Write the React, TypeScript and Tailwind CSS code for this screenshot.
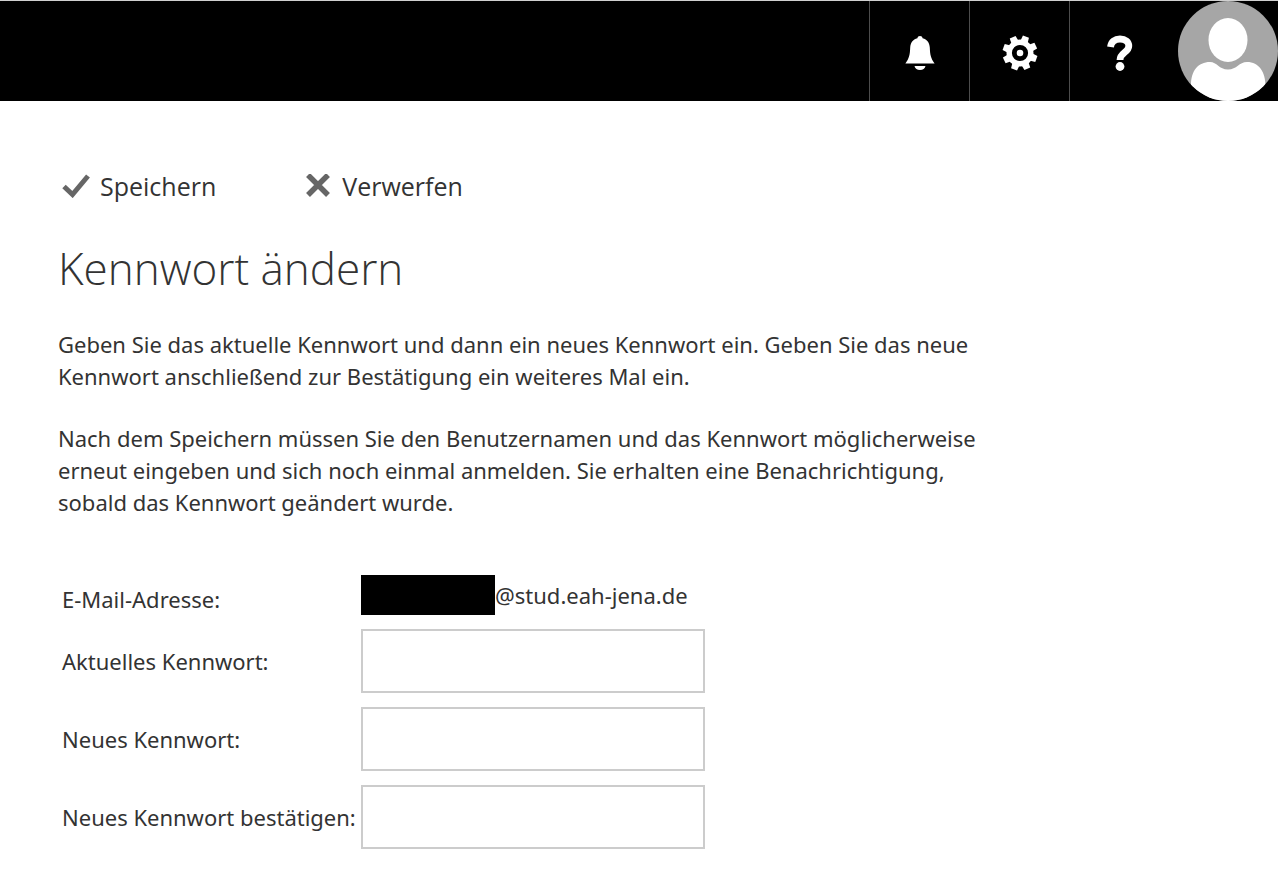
import type { ReactNode } from 'react'

const FIELDS = [
  { id: 'current', label: 'Aktuelles Kennwort:' },
  { id: 'next', label: 'Neues Kennwort:' },
  { id: 'confirm', label: 'Neues Kennwort bestätigen:' },
]

function BellIcon() {
  return (
    <svg width="30" height="34" viewBox="0 0 30 34" fill="#fff" aria-hidden="true">
      <path d="M15 0c1.5 0 2.3.8 2.6 2.2 4.600 1.300 6.900 4.500 7.200 9.300.3 7 .8 10.500 4.800 16H.4c4-5.500 4.500-9 4.800-16 .3-4.800 2.600-8 7.200-9.300C12.700.8 13.500 0 15 0Z" />
      <path d="M9.500 30h11c-.6 2.500-2.600 4-5.500 4s-4.900-1.500-5.500-4Z" />
    </svg>
  )
}

function GearIcon() {
  return (
    <svg width="36" height="36" viewBox="-18 -18 36 36" aria-hidden="true">
      <circle r="10.800" fill="none" stroke="#fff" strokeWidth="5.400" />
      <circle r="3.300" fill="#fff" />
      <g fill="#fff">
        {[20, 65, 110, 155, 200, 245, 290, 335].map((deg) => (
          <path key={deg} transform={`rotate(${deg})`} d="M-3.800-11.500-3.200-17.400H3.200L3.800-11.500Z" />
        ))}
      </g>
    </svg>
  )
}

function HelpIcon() {
  return (
    <svg width="26" height="36" viewBox="0 0 26 36" aria-hidden="true">
      <path
        d="M3.500 12C4.200 6.500 8 4 13 4c5.400 0 8.800 2.600 8.800 7 0 6.500-8.800 6.500-8.800 14"
        fill="none"
        stroke="#fff"
        strokeWidth="6.800"
      />
      <circle cx="13" cy="31.500" r="4.400" fill="#fff" />
    </svg>
  )
}

function Avatar() {
  return (
    <svg width="100" height="100" viewBox="0 0 100 100" aria-hidden="true">
      <clipPath id="avatar">
        <circle cx="50" cy="50" r="50" />
      </clipPath>
      <g clipPath="url(#avatar)">
        <rect width="100" height="100" fill="#a6a6a6" />
        <ellipse cx="50" cy="39" rx="19.500" ry="22" fill="#fff" />
        <path
          d="M13 100V84C13 70 20 61 32 61c7 0 9 7.500 18 7.500S61 61 69 61c12 0 18.500 10 18.500 24v16Z"
          fill="#fff"
        />
      </g>
    </svg>
  )
}

function HeaderButton({ label, children }: { label: string; children: ReactNode }) {
  return (
    <button
      type="button"
      aria-label={label}
      className="flex w-[100px] items-center justify-center border-l border-[#4d4d4d] pt-1"
    >
      {children}
    </button>
  )
}

export default function App() {
  return (
    <div className="min-h-screen bg-white font-['Noto_Sans','Open_Sans',sans-serif] text-[22px] leading-8 text-[#333]">
      <header className="mr-0.5 flex h-[101px] justify-end border-t border-[#d0d0d0] bg-black">
        <HeaderButton label="Benachrichtigungen">
          <BellIcon />
        </HeaderButton>
        <HeaderButton label="Einstellungen">
          <GearIcon />
        </HeaderButton>
        <HeaderButton label="Hilfe">
          <HelpIcon />
        </HeaderButton>
        <button type="button" aria-label="Konto" className="ml-[9px]">
          <Avatar />
        </button>
      </header>

      <main className="px-[58px] pt-[69px]">
        <form>
          <div className="flex gap-[88px] pl-1 font-['Open_Sans','Noto_Sans',sans-serif] text-[25px]">
            <button type="submit" className="flex items-center gap-2.5">
              <svg width="28" height="24" viewBox="0 0 28 24" aria-hidden="true">
                <path d="M2 12.500 10.500 20.500 26 2" fill="none" stroke="#666" strokeWidth="5" />
              </svg>
              Speichern
            </button>
            <button type="reset" className="flex items-center gap-2.5">
              <svg width="28" height="24" viewBox="0 0 28 24" aria-hidden="true">
                <path d="M4 1 24 21M24 1 4 21" fill="none" stroke="#666" strokeWidth="5.500" />
              </svg>
              Verwerfen
            </button>
          </div>

          <h1 className="mt-[34px] font-['Open_Sans','Noto_Sans',sans-serif] text-[44px] leading-[64px] font-light">
            Kennwort ändern
          </h1>

          <p className="mt-7 max-w-[950px]">
            Geben Sie das aktuelle Kennwort und dann ein neues Kennwort ein. Geben Sie das neue Kennwort
            anschließend zur Bestätigung ein weiteres Mal ein.
          </p>
          <p className="mt-[30px] max-w-[950px]">
            Nach dem Speichern müssen Sie den Benutzernamen und das Kennwort möglicherweise erneut eingeben
            und sich noch einmal anmelden. Sie erhalten eine Benachrichtigung, sobald das Kennwort geändert
            wurde.
          </p>

          <div className="mt-[57px] flex flex-col gap-3.5 pl-1">
            <div className="flex items-end">
              <span className="w-[299px]">E-Mail-Adresse:</span>
              <span className="flex items-center">
                <span className="h-10 w-[134px] bg-black" />
                @stud.eah-jena.de
              </span>
            </div>
            {FIELDS.map((f) => (
              <div key={f.id} className="flex items-center">
                <label htmlFor={f.id} className="w-[299px] whitespace-nowrap">
                  {f.label}
                </label>
                <input id={f.id} type="password" className="h-16 w-[344px] border-2 border-[#ccc] px-3" />
              </div>
            ))}
          </div>
        </form>
      </main>
    </div>
  )
}
